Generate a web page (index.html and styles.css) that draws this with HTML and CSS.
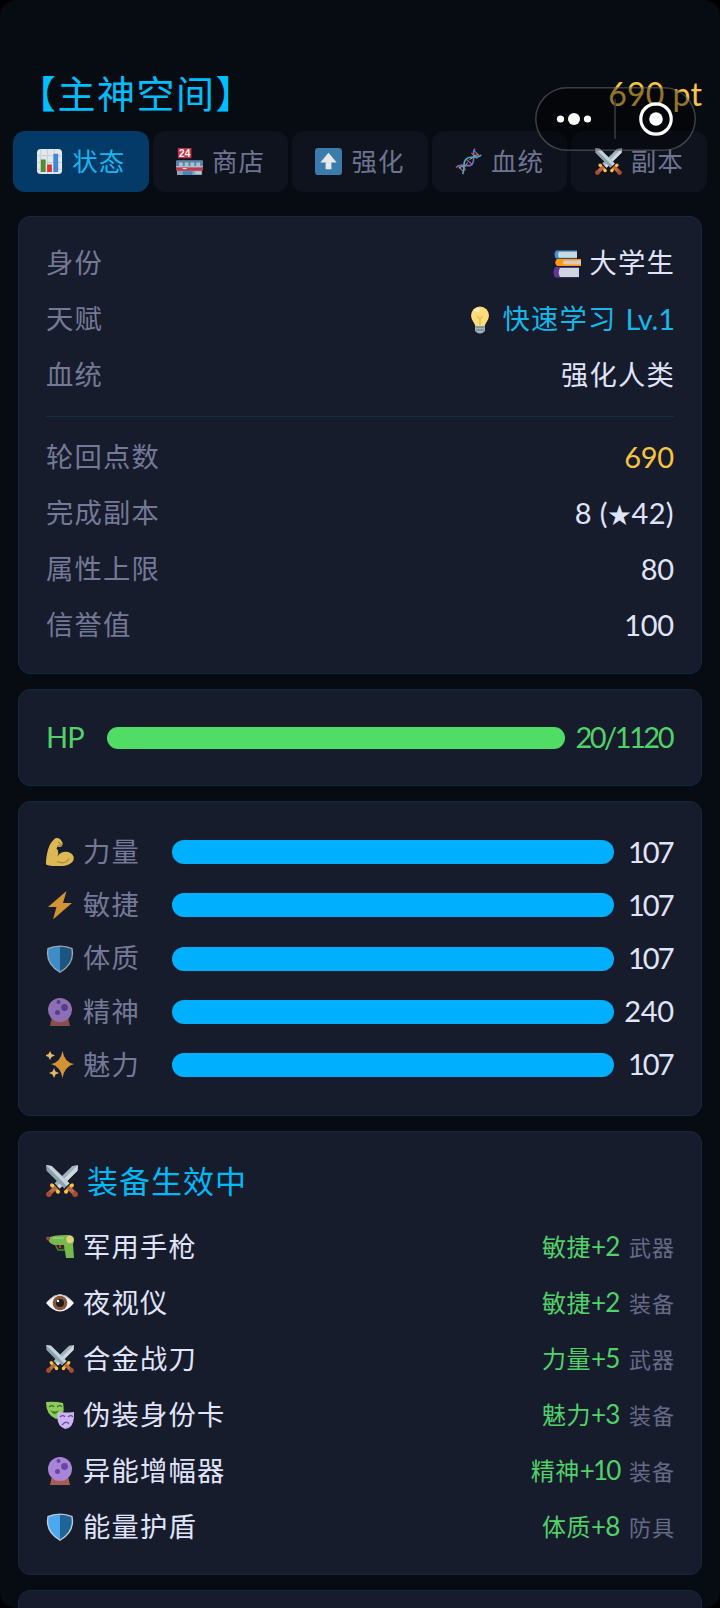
FILE: index.html
```html
<!DOCTYPE html>
<html lang="zh-CN">
<head>
<meta charset="utf-8">
<title>主神空间</title>
<link rel="stylesheet" href="styles.css">
</head>
<body>
<svg class="defs" aria-hidden="true">
<defs>
<symbol id="swords" viewBox="0 0 28 28">
<g><path d="M28 0l-.5 5L12 20.500l-4.500-4.500L23 .8z" fill="#9fb3bf"/><path d="M28 0l-.5 5L12 20.500l-2.200-2.200z" fill="#cfd9df"/><path d="M5 17.500l5.500 5.500" stroke="#f0a52b" stroke-width="2.800" stroke-linecap="round"/><path d="M8.500 19.500L3 25" stroke="#b76a45" stroke-width="3.800"/><circle cx="2.500" cy="25.500" r="2.400" fill="#a94c30"/><circle cx="5.500" cy="18" r="1.700" fill="#ffc23c"/><circle cx="10.500" cy="23.500" r="1.700" fill="#ffc23c"/></g>
<g transform="matrix(-1 0 0 1 28 0)"><path d="M28 0l-.5 5L12 20.500l-4.500-4.500L23 .8z" fill="#8da2af"/><path d="M28 0l-5 .8L7.500 16l2.300 2.300z" fill="#c6d2d9"/><path d="M5 17.500l5.500 5.500" stroke="#f0a52b" stroke-width="2.800" stroke-linecap="round"/><path d="M8.500 19.500L3 25" stroke="#b76a45" stroke-width="3.800"/><circle cx="2.500" cy="25.500" r="2.400" fill="#a94c30"/><circle cx="5.500" cy="18" r="1.700" fill="#ffc23c"/><circle cx="10.500" cy="23.500" r="1.700" fill="#ffc23c"/></g>
</symbol>
<symbol id="chart" viewBox="0 0 28 28"><rect x="1" y="1" width="26" height="26" rx="4" fill="#e2e8ec"/><path d="M5 1v26M12 1v26M19 1v26M1 8h26M1 15h26M1 22h26" stroke="#c5ced5"/><path d="M5 12h5v13H5z" fill="#558b2f"/><path d="M11.500 17h5v8h-5z" fill="#dc3434"/><path d="M18 6h5v19h-5z" fill="#4286d8"/></symbol>
<symbol id="store" viewBox="0 0 28 28"><path d="M2 0h14v10.500H2z" fill="#c92d45"/><text x="9" y="9" text-anchor="middle" class="store-num">24</text><path d="M1 13h26v15H1z" fill="#8da4b5"/><path d="M0 13h28v7H0z" fill="#5585a8"/><path d="M3 15h4v4H3zm6 0h4v4H9zm6 0h4v4h-4zm6 0h4v4h-4z" fill="#a9c2d2"/><path d="M0 20h28v3.500H0z" fill="#c13750"/><path d="M0 19h28v1H0z" fill="#c4d0d6"/><path d="M6 21q3 2 6 0z" fill="#fff"/><path d="M7 24h10v4H7z" fill="#4485bf"/><path d="M20 24h6v3h-6z" fill="#b7cbd8"/></symbol>
<symbol id="up" viewBox="0 0 28 28"><rect width="28" height="28" rx="3.500" fill="#3b7cac"/><path d="M14 5l8.500 10H17v7h-6v-7H5.500z" fill="#e6e8ea"/></symbol>
<symbol id="dna" viewBox="0 0 28 28"><path d="M3 18l5 6M6 17l5 6M17 5l6 6M20 3l5 5M12 12l6 5" stroke="#b96a73" stroke-width="1.200"/><path d="M4 21l5-3M10 20l3-5M15 12l5-3M19 8l5-1" stroke="#d9bd58" stroke-width="1"/><path d="M1 20C8 14 17 23 19 14S17 3 21 1" fill="none" stroke="#756acb" stroke-width="1.700"/><path d="M8 27C11 21 7 15 12 11s13 1 15-4" fill="none" stroke="#4daacb" stroke-width="1.700"/></symbol>
<symbol id="books" viewBox="0 0 28 28"><path d="M3 .5h21v8H3q-3-4 0-8" fill="#4b8fcb"/><path d="M6 1.800h18v6H6q-2-3 0-6" fill="#c8d7e2"/><path d="M4 9h24v7H4q-3.500-3.500 0-7" fill="#ff9810"/><path d="M11 10.500h17v4H11q-2-2 0-4" fill="#dbcbbf"/><path d="M2 17h24v10.500H2q-3-5 0-10.500" fill="#5f3796"/><path d="M7 18h19v9H7q-2.500-4.500 0-9" fill="#ced5df"/></symbol>
<symbol id="bulb" viewBox="0 0 28 28"><path d="M9 17h10v8q-5 5-10 0z" fill="#a3b5bd"/><path d="M9.500 21h9M10 24h8" stroke="#607582" stroke-width="1"/><circle cx="14" cy="9.500" r="9" fill="#ffdc7a"/><path d="M6 13h16l-3.500 7h-9z" fill="#ffdc7a"/><path d="M11 10l3 3v6m3-9l-3 3" fill="none" stroke="#e9b94a" stroke-width="1.200"/><ellipse cx="11" cy="4" rx="3" ry="1.800" fill="#fff0bd"/></symbol>
<symbol id="arm" viewBox="0 0 28 28"><path d="M0 26.500C0 16 3 5 8 1.500C10-1 14 0 15.500 3q2 2 .5 5q-2 1.500-4.500 .5l-1 2q3 2.500 1 8C14 12.500 25 12 27.500 18.500C30 29 9 30 0 26.500" fill="#ddb955"/><path d="M11 23.500q8 3.500 12-3M12 4l4 3M11.500 8l4-.5" fill="none" stroke="#b5873c" stroke-width="1.300"/></symbol>
<symbol id="bolt" viewBox="0 0 28 28"><path d="M20.500 0L2 16h8.500L7 28.500L26 12h-9z" fill="#d29335"/></symbol>
<symbol id="shield" viewBox="0 0 28 28"><path d="M14 .5Q21 .5 26.500 3Q30 19 14 28Q-2 19 1.500 3Q7 .5 14 .5" fill="#b9ced9"/><path d="M14 1.800Q8 1.800 2.700 4Q0 18 14 26.500z" fill="#4aa8f2"/><path d="M14 1.800Q20 1.800 25.300 4Q28 18 14 26.500z" fill="#1f6496"/></symbol>
<symbol id="orb" viewBox="0 0 28 28"><path d="M5.500 21h17l1.500 7H4z" fill="#a95d50"/><circle cx="14" cy="12" r="12" fill="#aa84d8"/><circle cx="12.500" cy="4" r="2" fill="#6747a0"/><circle cx="18.500" cy="9.500" r="3.400" fill="#6747a0"/><circle cx="11.500" cy="14.500" r="2.500" fill="#6747a0"/></symbol>
<symbol id="sparkles" viewBox="0 0 28 28"><path d="M16.500 0Q18.500 11.500 28 13Q18.500 15.500 16.500 27Q14.500 15.500 5 13Q14.500 11.500 16.500 0" fill="#d29335"/><path d="M4 0l1.500 3L9 4.500L5.500 6L4 9L2.500 6L-1 4.500L2.500 3zM8 17l1.500 3.500L13 22l-3.500 1.500L8 27l-1.500-3.500L3 22l3.500-1.500z" fill="#ddba68"/></symbol>
<symbol id="gun" viewBox="0 0 28 28"><path d="M9 11l3 6h7v-6z" fill="#34271f" stroke="#4f8932" stroke-width="1.300"/><path d="M14 11v4" stroke="#c24a36" stroke-width="1.600"/><path d="M2 5q5-3.500 22-3q6 3 3 9l1 14h-8l-2-13H8Q2 10 2 5" fill="#76b94f"/><circle cx="2" cy="5.500" r="2" fill="#9f403d"/><circle cx="24" cy="6.500" r="3.700" fill="#e3d07d"/><path d="M7 5h11" stroke="#98d174" stroke-width="1.600"/></symbol>
<symbol id="eye" viewBox="0 0 28 28"><path d="M0 14Q14-3 28 14Q14 31 0 14" fill="#f5f5f5"/><circle cx="14" cy="14" r="7.300" fill="#83583e"/><circle cx="14" cy="14" r="4" fill="#201b1c"/><circle cx="12" cy="12" r="1.200" fill="#fff"/><path d="M1 13Q14-2 27 13" fill="none" stroke="#bdb5ae"/></symbol>
<symbol id="masks" viewBox="0 0 28 28"><path d="M0 1q9-1 17 1q3 14-7 16Q0 14 0 1" fill="#8ccc57"/><path d="M3 6q3-3 5 0m3 0q3-3 5 0" fill="none" stroke="#39742f" stroke-width="1.300"/><path d="M4 9q5 3 9 0q-4 8-9 0" fill="#427c33"/><path d="M12 11q8 1 16 0q1 16-9 17Q9 24 12 11" fill="#cdb4f4"/><path d="M14 16q3-3 5 0m3 0q3-3 5 0M16 24q4-5 7-1" fill="none" stroke="#76519f" stroke-width="1.300"/></symbol>
</defs>
</svg>
<div class="screen">
<header class="header"><h1 class="title">【主神空间】</h1><span class="points">690 pt</span></header>
<div class="capsule"><svg width="161" height="64" viewBox="0 0 161 64" fill="#fff"><circle cx="25.500" cy="32" r="3.600"/><circle cx="39" cy="32" r="6"/><circle cx="52.500" cy="32" r="3.600"/><path d="M80 12v40" stroke="#3b3d40" stroke-width="1.500"/><circle cx="121" cy="32" r="15.200" fill="none" stroke="#fff" stroke-width="3.200"/><circle cx="121" cy="32" r="6.800"/></svg></div>
<nav class="tabs">
<div class="tab active"><svg class="ico"><use href="#chart"/></svg>状态</div>
<div class="tab"><svg class="ico"><use href="#store"/></svg>商店</div>
<div class="tab"><svg class="ico"><use href="#up"/></svg>强化</div>
<div class="tab"><svg class="ico"><use href="#dna"/></svg>血统</div>
<div class="tab"><svg class="ico"><use href="#swords"/></svg>副本</div>
</nav>
<main class="cards">
<section class="card profile">
<div class="row"><span class="label">身份</span><span class="value"><svg class="ico"><use href="#books"/></svg>大学生</span></div>
<div class="row"><span class="label">天赋</span><span class="value cyan"><svg class="ico"><use href="#bulb"/></svg>快速学习 <span class="lv">Lv.1</span></span></div>
<div class="row"><span class="label">血统</span><span class="value">强化人类</span></div>
<div class="divider"></div>
<div class="row"><span class="label">轮回点数</span><span class="value num gold">690</span></div>
<div class="row"><span class="label">完成副本</span><span class="value num runs">8 (<span class="star">★</span>42)</span></div>
<div class="row"><span class="label">属性上限</span><span class="value num">80</span></div>
<div class="row"><span class="label">信誉值</span><span class="value num">100</span></div>
</section>
<section class="card hp"><span class="hp-label">HP</span><div class="bar green"></div><span class="num hp-value">20/1120</span></section>
<section class="card stats">
<div class="stat"><span class="label"><svg class="ico"><use href="#arm"/></svg>力量</span><div class="bar"></div><span class="num tight">107</span></div>
<div class="stat"><span class="label"><svg class="ico"><use href="#bolt"/></svg>敏捷</span><div class="bar"></div><span class="num tight">107</span></div>
<div class="stat"><span class="label"><svg class="ico dim"><use href="#shield"/></svg>体质</span><div class="bar"></div><span class="num tight">107</span></div>
<div class="stat"><span class="label"><svg class="ico dim"><use href="#orb"/></svg>精神</span><div class="bar"></div><span class="num">240</span></div>
<div class="stat"><span class="label"><svg class="ico"><use href="#sparkles"/></svg>魅力</span><div class="bar"></div><span class="num tight">107</span></div>
</section>
<section class="card equip">
<h2 class="subtitle"><svg class="ico big"><use href="#swords"/></svg>装备生效中</h2>
<div class="row"><span class="item"><svg class="ico"><use href="#gun"/></svg>军用手枪</span><span class="effect">敏捷<b>+2</b></span><span class="tag">武器</span></div>
<div class="row"><span class="item"><svg class="ico"><use href="#eye"/></svg>夜视仪</span><span class="effect">敏捷<b>+2</b></span><span class="tag">装备</span></div>
<div class="row"><span class="item"><svg class="ico"><use href="#swords"/></svg>合金战刀</span><span class="effect">力量<b>+5</b></span><span class="tag">武器</span></div>
<div class="row"><span class="item"><svg class="ico"><use href="#masks"/></svg>伪装身份卡</span><span class="effect">魅力<b>+3</b></span><span class="tag">装备</span></div>
<div class="row"><span class="item"><svg class="ico"><use href="#orb"/></svg>异能增幅器</span><span class="effect">精神<b class="ten">+10</b></span><span class="tag">装备</span></div>
<div class="row"><span class="item"><svg class="ico"><use href="#shield"/></svg>能量护盾</span><span class="effect">体质<b>+8</b></span><span class="tag">防具</span></div>
</section>
<section class="card next"></section>
</main>
</div>
</body>
</html>
```
FILE: styles.css
```css
* { box-sizing: border-box; }
body { margin: 0; background: #000; }
.defs { position: absolute; width: 0; height: 0; }
.screen {
  position: relative;
  width: 720px;
  height: 1608px;
  overflow: hidden;
  border-radius: 16px;
  background: #070b12;
  color: #e0e4fa;
  font: 27.300px/1 "Noto Sans CJK SC", sans-serif;
  letter-spacing: 1.200px;
  white-space: nowrap;
}
.header {
  display: flex;
  align-items: flex-start;
  justify-content: space-between;
  height: 131px;
  padding: 71px 18px 0 18px;
}
.title { margin: 0; color: #00bfff; font-size: 38px; font-weight: 400; line-height: 42px; letter-spacing: 1.500px; }
.points { padding-top: 1px; color: #f5c542; font: 32px/44px Lato, sans-serif; letter-spacing: .1px; }
.capsule {
  position: absolute;
  left: 535px;
  top: 87px;
  width: 161px;
  height: 64px;
  border-radius: 32px;
  background: rgba(0, 0, 0, .4);
  box-shadow: inset 0 0 0 1.500px rgba(255, 255, 255, .23);
}
.capsule svg { display: block; }
.tabs { display: grid; grid-template-columns: repeat(5, 1fr); gap: 4px; height: 61px; padding: 0 13px; }
.tab {
  display: flex;
  align-items: center;
  justify-content: center;
  gap: 9px;
  padding-bottom: 4px;
  border-radius: 12px;
  background: #0f131e;
  color: #6e7491;
  font-size: 25.500px;
  letter-spacing: 1px;
}
.tab.active { background: #043a67; color: #16b8ef; }
.ico { flex: none; width: 28px; height: 28px; margin-top: 3px; overflow: visible; }
.tab .ico { width: 27px; height: 27px; margin-top: 4px; }
.store-num { fill: #fff; font: bold 10.500px "Liberation Sans", sans-serif; letter-spacing: 0; }
.cards { display: flex; flex-direction: column; gap: 15px; padding: 23.500px 18px 0; }
.card { border: 1.500px solid #14293f; border-radius: 12px; background: #171c2d; }
.profile { height: 458.500px; padding: 19px 27px; }
.row { display: flex; align-items: center; justify-content: space-between; height: 56px; }
.label { padding-bottom: 3px; color: #737996; }
.value, .item, .stat .label { display: flex; align-items: center; gap: 9px; padding-bottom: 3px; }
.value { margin-right: -1px; }
.cyan { color: #15b8e8; }
.lv { font: 29px/1 Lato, sans-serif; letter-spacing: -.1px; }
.num { padding-bottom: 2px; font: 29px/1 Lato, "Noto Sans CJK SC", sans-serif; letter-spacing: -.2px; }
.value.num { display: block; margin-right: 0; }
.runs { letter-spacing: .4px; }
.star { font-size: 23px; vertical-align: 1px; }
.gold { color: #f5c542; }
.divider { height: 1.500px; margin: 12px 0 12.500px; background: #152d43; }
.hp { display: flex; align-items: center; height: 97px; padding: 0 27px; color: #50d269; }
.hp-label { width: 60.500px; padding-bottom: 2px; font: 29px/1 Lato, sans-serif; letter-spacing: -.9px; }
.bar { flex: 1; height: 24px; border-radius: 12px; background: #00b0ff; }
.bar.green { height: 22px; background: #51dd65; }
.hp-value { width: 109px; padding-right: 2px; text-align: right; letter-spacing: -2.500px; }
.stats { display: flex; flex-direction: column; height: 315px; padding: 23.500px 27px; }
.stat { display: flex; flex: 1; align-items: center; }
.stat .label { width: 125.500px; }
.stat .num { width: 60.500px; text-align: right; }
.stat .tight { padding-right: 1.500px; letter-spacing: -2px; }
.dim { opacity: .8; }
.equip { height: 444px; padding: 19px 27px; }
.subtitle { display: flex; align-items: center; gap: 9px; height: 60px; margin: 0 0 8px; padding-bottom: 4px; color: #00b9f5; font-size: 31px; font-weight: 400; letter-spacing: 1px; }
.big { width: 32px; height: 32px; margin-top: 4px; }
.effect { margin-left: auto; padding-bottom: 3px; color: #50d269; font-size: 24px; letter-spacing: .5px; }
.effect b { font: 26px/1 Lato, sans-serif; letter-spacing: -.8px; }
.effect .ten { letter-spacing: -1.800px; }
.tag { margin: 0 -1px 0 9.500px; padding-bottom: 3px; color: #656b87; font-size: 22px; letter-spacing: 1px; }
.next { height: 80px; }
```
